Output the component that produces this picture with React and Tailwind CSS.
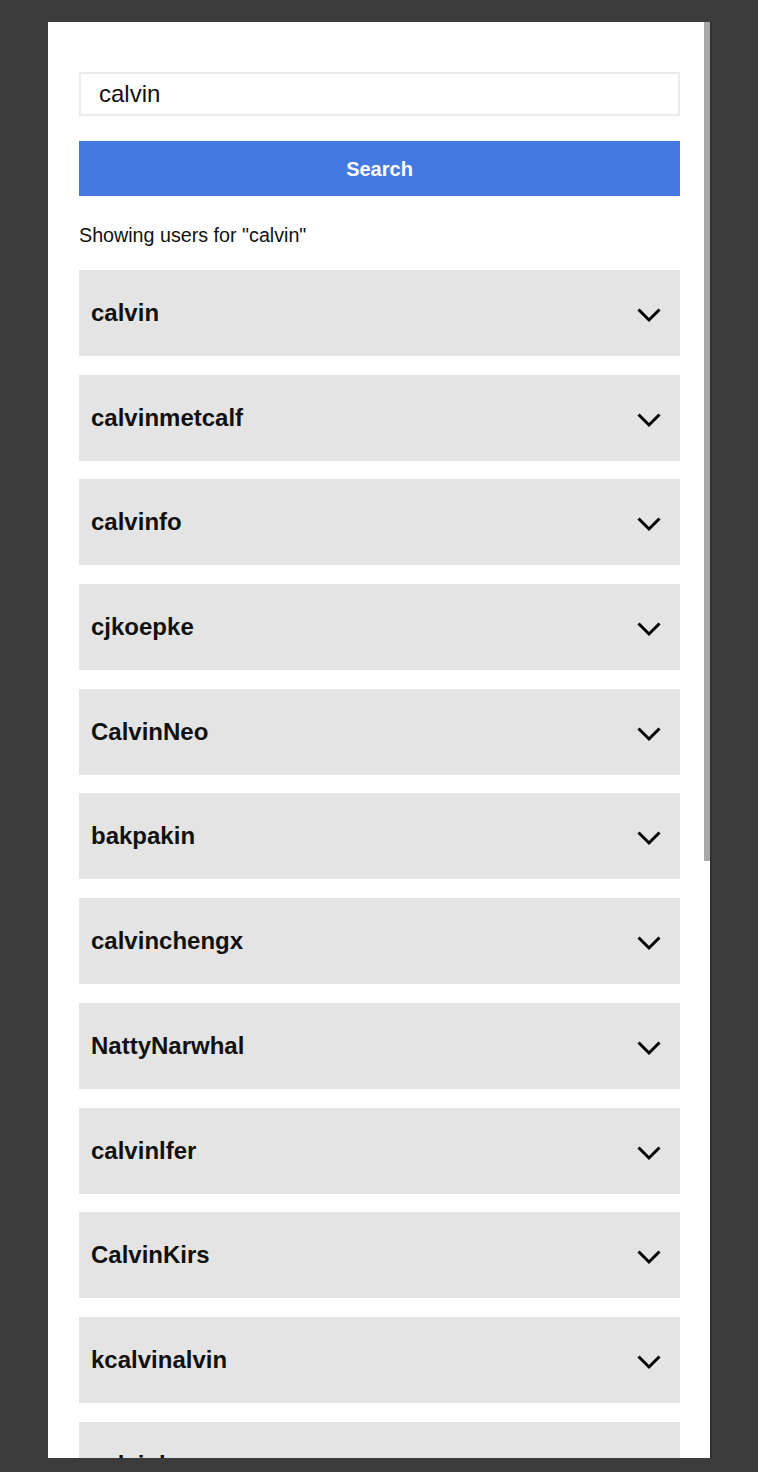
import React from "react";

const users = [
  "calvin",
  "calvinmetcalf",
  "calvinfo",
  "cjkoepke",
  "CalvinNeo",
  "bakpakin",
  "calvinchengx",
  "NattyNarwhal",
  "calvinlfer",
  "CalvinKirs",
  "kcalvinalvin",
  "calvinleung",
];

function Chevron() {
  return (
    <svg width="26" height="16" viewBox="0 0 26 16" fill="none" className="translate-y-[2px]">
      <polyline points="2.5,2.5 13,13 23.5,2.5" stroke="#000" strokeWidth="3" strokeLinejoin="miter" />
    </svg>
  );
}

export default function App() {
  return (
    <div className="min-h-screen bg-[#3b3b3b] pt-[22px] pl-[48px]" style={{ fontFamily: '"Liberation Sans", Arial, sans-serif' }}>
      <div className="relative w-[664px] h-[1436px] bg-white overflow-hidden border-r-2 border-[#2f2f2f]">
        <div className="ml-[31px] w-[601px] pt-[50px]">
          <div className="h-[44px] border-2 border-[#ebebeb] flex items-center pl-[18px] text-[24px] text-[#111]">
            calvin
          </div>
          <button className="mt-[25px] w-full h-[55px] bg-[#4479e1] text-white font-bold text-[20px] flex items-center justify-center">
            Search
          </button>
          <p className="mt-[26px] text-[19.7px] leading-[26px] text-[#111]">Showing users for "calvin"</p>
          <div className="mt-[22px] flex flex-col gap-[18.7px]">
            {users.map((u) => (
              <div key={u} className="h-[86px] bg-[#e4e4e4] flex items-center justify-between pl-[12px] pr-[18px]">
                <span className="font-bold text-[24px] text-[#111]">{u}</span>
                <Chevron />
              </div>
            ))}
          </div>
        </div>
        <div className="absolute right-0 top-0 w-[6px] h-[839px] bg-[#a8a8a8]" />
      </div>
    </div>
  );
}
